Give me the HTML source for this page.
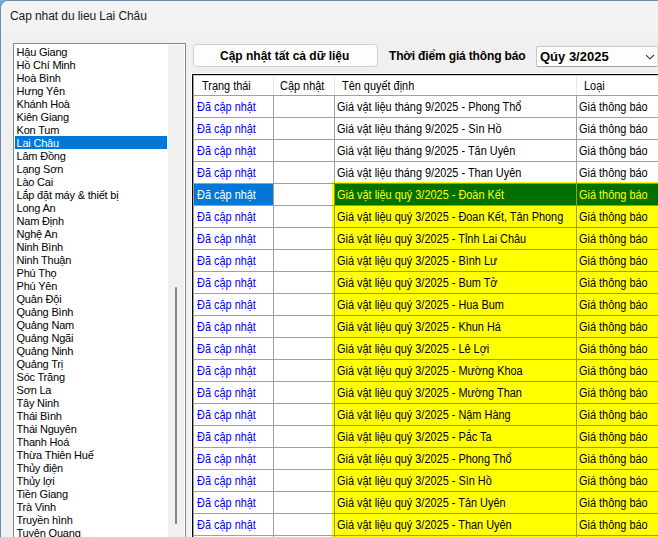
<!DOCTYPE html>
<html><head><meta charset="utf-8"><style>
*{margin:0;padding:0;box-sizing:border-box}
html,body{width:658px;height:537px;overflow:hidden;background:#78acdc;font-family:"Liberation Sans",sans-serif}
.a{position:absolute}
.t{position:absolute;white-space:nowrap}
#win{position:absolute;left:0;top:0;width:700px;height:600px;background:#f0f0f0;border-top-left-radius:8px;border-left:1px solid #6a8cab;border-top:1px solid #6a8cab;overflow:hidden}
</style></head><body>
<div id="win">

<div class="a" style="left:0px;top:0px;width:700px;height:30px;background:#f3f3f3;border-top-left-radius:7px;border-left:1px solid #f6f6f7;border-top:1px solid #f6f6f7"></div>
<div class="t" style="left:9px;top:9px;font-size:12px;line-height:12px;color:#1a1a1a;letter-spacing:-0.08px">Cap nhat du lieu Lai Châu</div>
<div class="a" style="left:12px;top:42px;width:173px;height:600px;border:1px solid #828790;background:#fff"></div>
<div class="t" style="left:15.5px;top:45px;font-size:11px;line-height:13px;color:#000;letter-spacing:-0.2px">Hậu Giang</div>
<div class="t" style="left:15.5px;top:58px;font-size:11px;line-height:13px;color:#000;letter-spacing:-0.2px">Hồ Chí Minh</div>
<div class="t" style="left:15.5px;top:71px;font-size:11px;line-height:13px;color:#000;letter-spacing:-0.2px">Hoà Bình</div>
<div class="t" style="left:15.5px;top:84px;font-size:11px;line-height:13px;color:#000;letter-spacing:-0.2px">Hưng Yên</div>
<div class="t" style="left:15.5px;top:97px;font-size:11px;line-height:13px;color:#000;letter-spacing:-0.2px">Khánh Hoà</div>
<div class="t" style="left:15.5px;top:110px;font-size:11px;line-height:13px;color:#000;letter-spacing:-0.2px">Kiên Giang</div>
<div class="t" style="left:15.5px;top:123px;font-size:11px;line-height:13px;color:#000;letter-spacing:-0.2px">Kon Tum</div>
<div class="a" style="left:14px;top:135px;width:152px;height:13px;background:#0078d7"></div>
<div class="t" style="left:15.5px;top:136px;font-size:11px;line-height:13px;color:#fff;letter-spacing:-0.2px">Lai Châu</div>
<div class="t" style="left:15.5px;top:149px;font-size:11px;line-height:13px;color:#000;letter-spacing:-0.2px">Lâm Đồng</div>
<div class="t" style="left:15.5px;top:162px;font-size:11px;line-height:13px;color:#000;letter-spacing:-0.2px">Lạng Sơn</div>
<div class="t" style="left:15.5px;top:175px;font-size:11px;line-height:13px;color:#000;letter-spacing:-0.2px">Lào Cai</div>
<div class="t" style="left:15.5px;top:188px;font-size:11px;line-height:13px;color:#000;letter-spacing:-0.2px">Lắp đặt máy & thiết bị</div>
<div class="t" style="left:15.5px;top:201px;font-size:11px;line-height:13px;color:#000;letter-spacing:-0.2px">Long An</div>
<div class="t" style="left:15.5px;top:214px;font-size:11px;line-height:13px;color:#000;letter-spacing:-0.2px">Nam Định</div>
<div class="t" style="left:15.5px;top:227px;font-size:11px;line-height:13px;color:#000;letter-spacing:-0.2px">Nghệ An</div>
<div class="t" style="left:15.5px;top:240px;font-size:11px;line-height:13px;color:#000;letter-spacing:-0.2px">Ninh Bình</div>
<div class="t" style="left:15.5px;top:253px;font-size:11px;line-height:13px;color:#000;letter-spacing:-0.2px">Ninh Thuận</div>
<div class="t" style="left:15.5px;top:266px;font-size:11px;line-height:13px;color:#000;letter-spacing:-0.2px">Phú Thọ</div>
<div class="t" style="left:15.5px;top:279px;font-size:11px;line-height:13px;color:#000;letter-spacing:-0.2px">Phú Yên</div>
<div class="t" style="left:15.5px;top:292px;font-size:11px;line-height:13px;color:#000;letter-spacing:-0.2px">Quân Đội</div>
<div class="t" style="left:15.5px;top:305px;font-size:11px;line-height:13px;color:#000;letter-spacing:-0.2px">Quảng Bình</div>
<div class="t" style="left:15.5px;top:318px;font-size:11px;line-height:13px;color:#000;letter-spacing:-0.2px">Quảng Nam</div>
<div class="t" style="left:15.5px;top:331px;font-size:11px;line-height:13px;color:#000;letter-spacing:-0.2px">Quảng Ngãi</div>
<div class="t" style="left:15.5px;top:344px;font-size:11px;line-height:13px;color:#000;letter-spacing:-0.2px">Quảng Ninh</div>
<div class="t" style="left:15.5px;top:357px;font-size:11px;line-height:13px;color:#000;letter-spacing:-0.2px">Quảng Trị</div>
<div class="t" style="left:15.5px;top:370px;font-size:11px;line-height:13px;color:#000;letter-spacing:-0.2px">Sóc Trăng</div>
<div class="t" style="left:15.5px;top:383px;font-size:11px;line-height:13px;color:#000;letter-spacing:-0.2px">Sơn La</div>
<div class="t" style="left:15.5px;top:396px;font-size:11px;line-height:13px;color:#000;letter-spacing:-0.2px">Tây Ninh</div>
<div class="t" style="left:15.5px;top:409px;font-size:11px;line-height:13px;color:#000;letter-spacing:-0.2px">Thái Bình</div>
<div class="t" style="left:15.5px;top:422px;font-size:11px;line-height:13px;color:#000;letter-spacing:-0.2px">Thái Nguyên</div>
<div class="t" style="left:15.5px;top:435px;font-size:11px;line-height:13px;color:#000;letter-spacing:-0.2px">Thanh Hoá</div>
<div class="t" style="left:15.5px;top:448px;font-size:11px;line-height:13px;color:#000;letter-spacing:-0.2px">Thừa Thiên Huế</div>
<div class="t" style="left:15.5px;top:461px;font-size:11px;line-height:13px;color:#000;letter-spacing:-0.2px">Thủy điện</div>
<div class="t" style="left:15.5px;top:474px;font-size:11px;line-height:13px;color:#000;letter-spacing:-0.2px">Thủy lợi</div>
<div class="t" style="left:15.5px;top:487px;font-size:11px;line-height:13px;color:#000;letter-spacing:-0.2px">Tiền Giang</div>
<div class="t" style="left:15.5px;top:500px;font-size:11px;line-height:13px;color:#000;letter-spacing:-0.2px">Trà Vinh</div>
<div class="t" style="left:15.5px;top:513px;font-size:11px;line-height:13px;color:#000;letter-spacing:-0.2px">Truyền hình</div>
<div class="t" style="left:15.5px;top:526px;font-size:11px;line-height:13px;color:#000;letter-spacing:-0.2px">Tuyên Quang</div>
<div class="t" style="left:15.5px;top:539px;font-size:11px;line-height:13px;color:#000;letter-spacing:-0.2px">Vĩnh Long</div>
<div class="a" style="left:167px;top:44px;width:16px;height:600px;background:#f0f0f0"></div>
<div class="a" style="left:174px;top:286px;width:2px;height:237px;background:#858585;border-radius:1px"></div>
<div class="a" style="left:192px;top:43px;width:185px;height:23px;border:1px solid #d0d0d0;border-radius:4px;background:#fdfdfd"></div>
<div class="t" style="left:219px;top:49px;font-size:12px;line-height:12px;font-weight:bold;color:#000">Cập nhật tất cả dữ liệu</div>
<div class="t" style="left:388px;top:49px;font-size:12px;line-height:12px;font-weight:bold;color:#000;letter-spacing:-0.15px">Thời điểm giá thông báo</div>
<div class="a" style="left:535px;top:45px;width:122px;height:21px;border:1px solid #c8c8c8;border-bottom-color:#a0a0a0;border-right-color:#e0e0e0;border-radius:2px;background:#fdfdfd"></div>
<div class="t" style="left:539px;top:49px;font-size:13px;line-height:13px;font-weight:bold;color:#000">Qúy 3/2025</div>
<svg class="a" style="left:643px;top:52px" width="12" height="8"><polyline points="2,2.2 6,5.8 10,2" fill="none" stroke="#333" stroke-width="1.1"/></svg>
<div class="a" style="left:190px;top:72px;width:600px;height:600px;background:#fff;border-left:1px solid #fff;border-top:1px solid #fff"></div>
<div class="a" style="left:191px;top:73px;width:600px;height:600px;border-left:1px solid #000;border-top:1px solid #000;background:#fff"></div>
<div class="a" style="left:272px;top:76px;width:1px;height:18px;background:#e5e5e5"></div>
<div class="a" style="left:333px;top:76px;width:1px;height:18px;background:#e5e5e5"></div>
<div class="a" style="left:575px;top:76px;width:1px;height:18px;background:#e5e5e5"></div>
<div class="a" style="left:192px;top:94px;width:500px;height:1px;background:#a0a0a0"></div>
<div class="t" style="left:201px;top:79px;font-size:12px;line-height:13px;color:#000;transform:scaleX(0.91);transform-origin:0 0">Trạng thái</div>
<div class="t" style="left:279px;top:79px;font-size:12px;line-height:13px;color:#000;transform:scaleX(0.91);transform-origin:0 0">Cập nhật</div>
<div class="t" style="left:341px;top:79px;font-size:12px;line-height:13px;color:#000;transform:scaleX(0.91);transform-origin:0 0">Tên quyết định</div>
<div class="t" style="left:583px;top:79px;font-size:12px;line-height:13px;color:#000;transform:scaleX(0.91);transform-origin:0 0">Loại</div>
<div class="a" style="left:331px;top:181px;width:400px;height:600px;background:#ffff00"></div>
<div class="a" style="left:193px;top:183px;width:79px;height:21px;background:#0078d7"></div>
<div class="a" style="left:334px;top:183px;width:241px;height:21px;background:#007000"></div>
<div class="a" style="left:576px;top:183px;width:200px;height:21px;background:#007000"></div>
<div class="a" style="left:193px;top:116px;width:500px;height:1px;background:#a0a0a0"></div>
<div class="a" style="left:193px;top:138px;width:500px;height:1px;background:#a0a0a0"></div>
<div class="a" style="left:193px;top:160px;width:500px;height:1px;background:#a0a0a0"></div>
<div class="a" style="left:193px;top:182px;width:138px;height:1px;background:#a0a0a0"></div>
<div class="a" style="left:331px;top:182px;width:400px;height:1px;background:#a0a000"></div>
<div class="a" style="left:193px;top:204px;width:138px;height:1px;background:#a0a0a0"></div>
<div class="a" style="left:331px;top:204px;width:400px;height:1px;background:#a0a000"></div>
<div class="a" style="left:193px;top:226px;width:138px;height:1px;background:#a0a0a0"></div>
<div class="a" style="left:331px;top:226px;width:400px;height:1px;background:#a0a000"></div>
<div class="a" style="left:193px;top:248px;width:138px;height:1px;background:#a0a0a0"></div>
<div class="a" style="left:331px;top:248px;width:400px;height:1px;background:#a0a000"></div>
<div class="a" style="left:193px;top:270px;width:138px;height:1px;background:#a0a0a0"></div>
<div class="a" style="left:331px;top:270px;width:400px;height:1px;background:#a0a000"></div>
<div class="a" style="left:193px;top:292px;width:138px;height:1px;background:#a0a0a0"></div>
<div class="a" style="left:331px;top:292px;width:400px;height:1px;background:#a0a000"></div>
<div class="a" style="left:193px;top:314px;width:138px;height:1px;background:#a0a0a0"></div>
<div class="a" style="left:331px;top:314px;width:400px;height:1px;background:#a0a000"></div>
<div class="a" style="left:193px;top:336px;width:138px;height:1px;background:#a0a0a0"></div>
<div class="a" style="left:331px;top:336px;width:400px;height:1px;background:#a0a000"></div>
<div class="a" style="left:193px;top:358px;width:138px;height:1px;background:#a0a0a0"></div>
<div class="a" style="left:331px;top:358px;width:400px;height:1px;background:#a0a000"></div>
<div class="a" style="left:193px;top:380px;width:138px;height:1px;background:#a0a0a0"></div>
<div class="a" style="left:331px;top:380px;width:400px;height:1px;background:#a0a000"></div>
<div class="a" style="left:193px;top:402px;width:138px;height:1px;background:#a0a0a0"></div>
<div class="a" style="left:331px;top:402px;width:400px;height:1px;background:#a0a000"></div>
<div class="a" style="left:193px;top:424px;width:138px;height:1px;background:#a0a0a0"></div>
<div class="a" style="left:331px;top:424px;width:400px;height:1px;background:#a0a000"></div>
<div class="a" style="left:193px;top:446px;width:138px;height:1px;background:#a0a0a0"></div>
<div class="a" style="left:331px;top:446px;width:400px;height:1px;background:#a0a000"></div>
<div class="a" style="left:193px;top:468px;width:138px;height:1px;background:#a0a0a0"></div>
<div class="a" style="left:331px;top:468px;width:400px;height:1px;background:#a0a000"></div>
<div class="a" style="left:193px;top:490px;width:138px;height:1px;background:#a0a0a0"></div>
<div class="a" style="left:331px;top:490px;width:400px;height:1px;background:#a0a000"></div>
<div class="a" style="left:193px;top:512px;width:138px;height:1px;background:#a0a0a0"></div>
<div class="a" style="left:331px;top:512px;width:400px;height:1px;background:#a0a000"></div>
<div class="a" style="left:193px;top:534px;width:138px;height:1px;background:#a0a0a0"></div>
<div class="a" style="left:331px;top:534px;width:400px;height:1px;background:#a0a000"></div>
<div class="a" style="left:193px;top:556px;width:138px;height:1px;background:#a0a0a0"></div>
<div class="a" style="left:331px;top:556px;width:400px;height:1px;background:#a0a000"></div>
<div class="a" style="left:192px;top:74px;width:1px;height:600px;background:#a0a0a0"></div>
<div class="a" style="left:192px;top:74px;width:500px;height:1px;background:#d0d0d0"></div>
<div class="a" style="left:272px;top:95px;width:1px;height:600px;background:#a0a0a0"></div>
<div class="a" style="left:333px;top:95px;width:1px;height:86px;background:#a0a0a0"></div>
<div class="a" style="left:333px;top:181px;width:1px;height:600px;background:#a0a000"></div>
<div class="a" style="left:575px;top:95px;width:1px;height:86px;background:#a0a0a0"></div>
<div class="a" style="left:575px;top:181px;width:1px;height:600px;background:#a0a000"></div>
<div class="t" style="left:196px;top:100px;font-size:12px;line-height:13px;color:#0000ff;transform:scaleX(0.91);transform-origin:0 0">Đã cập nhật</div>
<div class="t" style="left:336px;top:100px;font-size:12px;line-height:13px;color:#000;transform:scaleX(0.91);transform-origin:0 0">Giá vật liệu tháng 9/2025 - Phong Thổ</div>
<div class="t" style="left:578px;top:100px;font-size:12px;line-height:13px;color:#000;transform:scaleX(0.91);transform-origin:0 0">Giá thông báo</div>
<div class="t" style="left:196px;top:122px;font-size:12px;line-height:13px;color:#0000ff;transform:scaleX(0.91);transform-origin:0 0">Đã cập nhật</div>
<div class="t" style="left:336px;top:122px;font-size:12px;line-height:13px;color:#000;transform:scaleX(0.91);transform-origin:0 0">Giá vật liệu tháng 9/2025 - Sìn Hồ</div>
<div class="t" style="left:578px;top:122px;font-size:12px;line-height:13px;color:#000;transform:scaleX(0.91);transform-origin:0 0">Giá thông báo</div>
<div class="t" style="left:196px;top:144px;font-size:12px;line-height:13px;color:#0000ff;transform:scaleX(0.91);transform-origin:0 0">Đã cập nhật</div>
<div class="t" style="left:336px;top:144px;font-size:12px;line-height:13px;color:#000;transform:scaleX(0.91);transform-origin:0 0">Giá vật liệu tháng 9/2025 - Tân Uyên</div>
<div class="t" style="left:578px;top:144px;font-size:12px;line-height:13px;color:#000;transform:scaleX(0.91);transform-origin:0 0">Giá thông báo</div>
<div class="t" style="left:196px;top:166px;font-size:12px;line-height:13px;color:#0000ff;transform:scaleX(0.91);transform-origin:0 0">Đã cập nhật</div>
<div class="t" style="left:336px;top:166px;font-size:12px;line-height:13px;color:#000;transform:scaleX(0.91);transform-origin:0 0">Giá vật liệu tháng 9/2025 - Than Uyên</div>
<div class="t" style="left:578px;top:166px;font-size:12px;line-height:13px;color:#000;transform:scaleX(0.91);transform-origin:0 0">Giá thông báo</div>
<div class="t" style="left:196px;top:188px;font-size:12px;line-height:13px;color:#fff;transform:scaleX(0.91);transform-origin:0 0">Đã cập nhật</div>
<div class="t" style="left:336px;top:188px;font-size:12px;line-height:13px;color:#ffff00;transform:scaleX(0.91);transform-origin:0 0">Giá vật liệu quý 3/2025 - Đoàn Kết</div>
<div class="t" style="left:578px;top:188px;font-size:12px;line-height:13px;color:#ffff00;transform:scaleX(0.91);transform-origin:0 0">Giá thông báo</div>
<div class="t" style="left:196px;top:210px;font-size:12px;line-height:13px;color:#0000ff;transform:scaleX(0.91);transform-origin:0 0">Đã cập nhật</div>
<div class="t" style="left:336px;top:210px;font-size:12px;line-height:13px;color:#000;transform:scaleX(0.91);transform-origin:0 0">Giá vật liệu quý 3/2025 - Đoan Kết, Tân Phong</div>
<div class="t" style="left:578px;top:210px;font-size:12px;line-height:13px;color:#000;transform:scaleX(0.91);transform-origin:0 0">Giá thông báo</div>
<div class="t" style="left:196px;top:232px;font-size:12px;line-height:13px;color:#0000ff;transform:scaleX(0.91);transform-origin:0 0">Đã cập nhật</div>
<div class="t" style="left:336px;top:232px;font-size:12px;line-height:13px;color:#000;transform:scaleX(0.91);transform-origin:0 0">Giá vật liệu quý 3/2025 - Tỉnh Lai Châu</div>
<div class="t" style="left:578px;top:232px;font-size:12px;line-height:13px;color:#000;transform:scaleX(0.91);transform-origin:0 0">Giá thông báo</div>
<div class="t" style="left:196px;top:254px;font-size:12px;line-height:13px;color:#0000ff;transform:scaleX(0.91);transform-origin:0 0">Đã cập nhật</div>
<div class="t" style="left:336px;top:254px;font-size:12px;line-height:13px;color:#000;transform:scaleX(0.91);transform-origin:0 0">Giá vật liệu quý 3/2025 - Bình Lư</div>
<div class="t" style="left:578px;top:254px;font-size:12px;line-height:13px;color:#000;transform:scaleX(0.91);transform-origin:0 0">Giá thông báo</div>
<div class="t" style="left:196px;top:276px;font-size:12px;line-height:13px;color:#0000ff;transform:scaleX(0.91);transform-origin:0 0">Đã cập nhật</div>
<div class="t" style="left:336px;top:276px;font-size:12px;line-height:13px;color:#000;transform:scaleX(0.91);transform-origin:0 0">Giá vật liệu quý 3/2025 - Bum Tở</div>
<div class="t" style="left:578px;top:276px;font-size:12px;line-height:13px;color:#000;transform:scaleX(0.91);transform-origin:0 0">Giá thông báo</div>
<div class="t" style="left:196px;top:298px;font-size:12px;line-height:13px;color:#0000ff;transform:scaleX(0.91);transform-origin:0 0">Đã cập nhật</div>
<div class="t" style="left:336px;top:298px;font-size:12px;line-height:13px;color:#000;transform:scaleX(0.91);transform-origin:0 0">Giá vật liệu quý 3/2025 - Hua Bum</div>
<div class="t" style="left:578px;top:298px;font-size:12px;line-height:13px;color:#000;transform:scaleX(0.91);transform-origin:0 0">Giá thông báo</div>
<div class="t" style="left:196px;top:320px;font-size:12px;line-height:13px;color:#0000ff;transform:scaleX(0.91);transform-origin:0 0">Đã cập nhật</div>
<div class="t" style="left:336px;top:320px;font-size:12px;line-height:13px;color:#000;transform:scaleX(0.91);transform-origin:0 0">Giá vật liệu quý 3/2025 - Khun Há</div>
<div class="t" style="left:578px;top:320px;font-size:12px;line-height:13px;color:#000;transform:scaleX(0.91);transform-origin:0 0">Giá thông báo</div>
<div class="t" style="left:196px;top:342px;font-size:12px;line-height:13px;color:#0000ff;transform:scaleX(0.91);transform-origin:0 0">Đã cập nhật</div>
<div class="t" style="left:336px;top:342px;font-size:12px;line-height:13px;color:#000;transform:scaleX(0.91);transform-origin:0 0">Giá vật liệu quý 3/2025 - Lê Lợi</div>
<div class="t" style="left:578px;top:342px;font-size:12px;line-height:13px;color:#000;transform:scaleX(0.91);transform-origin:0 0">Giá thông báo</div>
<div class="t" style="left:196px;top:364px;font-size:12px;line-height:13px;color:#0000ff;transform:scaleX(0.91);transform-origin:0 0">Đã cập nhật</div>
<div class="t" style="left:336px;top:364px;font-size:12px;line-height:13px;color:#000;transform:scaleX(0.91);transform-origin:0 0">Giá vật liệu quý 3/2025 - Mường Khoa</div>
<div class="t" style="left:578px;top:364px;font-size:12px;line-height:13px;color:#000;transform:scaleX(0.91);transform-origin:0 0">Giá thông báo</div>
<div class="t" style="left:196px;top:386px;font-size:12px;line-height:13px;color:#0000ff;transform:scaleX(0.91);transform-origin:0 0">Đã cập nhật</div>
<div class="t" style="left:336px;top:386px;font-size:12px;line-height:13px;color:#000;transform:scaleX(0.91);transform-origin:0 0">Giá vật liệu quý 3/2025 - Mường Than</div>
<div class="t" style="left:578px;top:386px;font-size:12px;line-height:13px;color:#000;transform:scaleX(0.91);transform-origin:0 0">Giá thông báo</div>
<div class="t" style="left:196px;top:408px;font-size:12px;line-height:13px;color:#0000ff;transform:scaleX(0.91);transform-origin:0 0">Đã cập nhật</div>
<div class="t" style="left:336px;top:408px;font-size:12px;line-height:13px;color:#000;transform:scaleX(0.91);transform-origin:0 0">Giá vật liệu quý 3/2025 - Nậm Hàng</div>
<div class="t" style="left:578px;top:408px;font-size:12px;line-height:13px;color:#000;transform:scaleX(0.91);transform-origin:0 0">Giá thông báo</div>
<div class="t" style="left:196px;top:430px;font-size:12px;line-height:13px;color:#0000ff;transform:scaleX(0.91);transform-origin:0 0">Đã cập nhật</div>
<div class="t" style="left:336px;top:430px;font-size:12px;line-height:13px;color:#000;transform:scaleX(0.91);transform-origin:0 0">Giá vật liệu quý 3/2025 - Pắc Ta</div>
<div class="t" style="left:578px;top:430px;font-size:12px;line-height:13px;color:#000;transform:scaleX(0.91);transform-origin:0 0">Giá thông báo</div>
<div class="t" style="left:196px;top:452px;font-size:12px;line-height:13px;color:#0000ff;transform:scaleX(0.91);transform-origin:0 0">Đã cập nhật</div>
<div class="t" style="left:336px;top:452px;font-size:12px;line-height:13px;color:#000;transform:scaleX(0.91);transform-origin:0 0">Giá vật liệu quý 3/2025 - Phong Thổ</div>
<div class="t" style="left:578px;top:452px;font-size:12px;line-height:13px;color:#000;transform:scaleX(0.91);transform-origin:0 0">Giá thông báo</div>
<div class="t" style="left:196px;top:474px;font-size:12px;line-height:13px;color:#0000ff;transform:scaleX(0.91);transform-origin:0 0">Đã cập nhật</div>
<div class="t" style="left:336px;top:474px;font-size:12px;line-height:13px;color:#000;transform:scaleX(0.91);transform-origin:0 0">Giá vật liệu quý 3/2025 - Sìn Hồ</div>
<div class="t" style="left:578px;top:474px;font-size:12px;line-height:13px;color:#000;transform:scaleX(0.91);transform-origin:0 0">Giá thông báo</div>
<div class="t" style="left:196px;top:496px;font-size:12px;line-height:13px;color:#0000ff;transform:scaleX(0.91);transform-origin:0 0">Đã cập nhật</div>
<div class="t" style="left:336px;top:496px;font-size:12px;line-height:13px;color:#000;transform:scaleX(0.91);transform-origin:0 0">Giá vật liệu quý 3/2025 - Tân Uyên</div>
<div class="t" style="left:578px;top:496px;font-size:12px;line-height:13px;color:#000;transform:scaleX(0.91);transform-origin:0 0">Giá thông báo</div>
<div class="t" style="left:196px;top:518px;font-size:12px;line-height:13px;color:#0000ff;transform:scaleX(0.91);transform-origin:0 0">Đã cập nhật</div>
<div class="t" style="left:336px;top:518px;font-size:12px;line-height:13px;color:#000;transform:scaleX(0.91);transform-origin:0 0">Giá vật liệu quý 3/2025 - Than Uyên</div>
<div class="t" style="left:578px;top:518px;font-size:12px;line-height:13px;color:#000;transform:scaleX(0.91);transform-origin:0 0">Giá thông báo</div>
<div class="t" style="left:196px;top:540px;font-size:12px;line-height:13px;color:#0000ff;transform:scaleX(0.91);transform-origin:0 0">Đã cập nhật</div>
<div class="t" style="left:336px;top:540px;font-size:12px;line-height:13px;color:#000;transform:scaleX(0.91);transform-origin:0 0">Giá vật liệu quý 3/2025 - Vàng San</div>
<div class="t" style="left:578px;top:540px;font-size:12px;line-height:13px;color:#000;transform:scaleX(0.91);transform-origin:0 0">Giá thông báo</div>
</div></body></html>
